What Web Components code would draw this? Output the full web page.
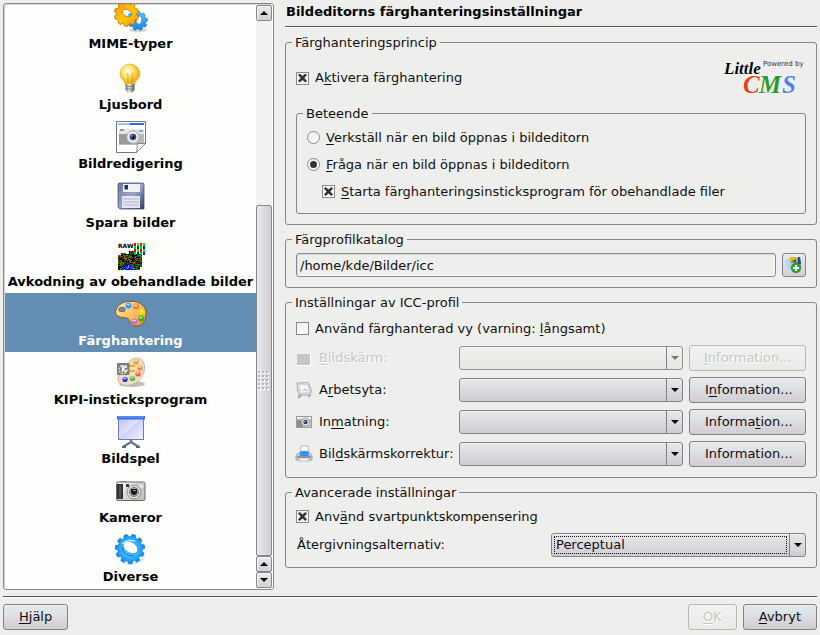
<!DOCTYPE html>
<html lang="sv">
<head>
<meta charset="utf-8">
<title>Bildeditorns färghanteringsinställningar</title>
<style>
html, body { margin: 0; }
body { background: #eeefec; color: #101010; font: 13px/16px "DejaVu Sans", sans-serif; }
</style>
</head>
<body>
<settings-dialog></settings-dialog>

<template id="t-dialog">
  <style>
    :host { display: flex; flex-direction: column; height: 100vh; box-sizing: border-box; padding: 3px 3px 5px; }
    .main { flex: 1; min-height: 0; display: grid; grid-template-columns: 271px 1fr; gap: 11px; }
    .page { display: flex; flex-direction: column; gap: 6px; min-width: 0; }
    h1 { margin: 0; padding: 1px 1px 6px; font-size: 13px; line-height: 16px; font-weight: bold; color: #000; }
    .head { border-bottom: 1px solid #555753; box-shadow: 0 1px #fff; margin-bottom: 1px; }
    hr { margin: 6px 0; border: 0; height: 1px; width: 100%; background: #555753; border-bottom: 1px solid #fff; }
    footer { display: flex; gap: 6px; }
    .grow { flex: 1; }
    .row { display: flex; align-items: center; justify-content: space-between; height: 54px; }
    .radios { display: flex; flex-direction: column; gap: 6px; padding-bottom: 1px; }
    .sub { margin-left: 15px; }
    .path { display: flex; gap: 6px; }
    path-input { flex: 1; }
    .stack { display: flex; flex-direction: column; gap: 6px; }
    .profiles { padding-top: 2px; }
  </style>
  <div class="main">
    <page-list>
      <page-item icon="mime">MIME-typer</page-item>
      <page-item icon="bulb" tall>Ljusbord</page-item>
      <page-item icon="edit">Bildredigering</page-item>
      <page-item icon="floppy">Spara bilder</page-item>
      <page-item icon="raw">Avkodning av obehandlade bilder</page-item>
      <page-item icon="palette" selected>Färghantering</page-item>
      <page-item icon="kipi">KIPI-insticksprogram</page-item>
      <page-item icon="screen">Bildspel</page-item>
      <page-item icon="camera">Kameror</page-item>
      <page-item icon="gear">Diverse</page-item>
    </page-list>
    <div class="page">
      <div class="head"><h1>Bildeditorns färghanteringsinställningar</h1></div>
      <group-box label="Färghanteringsprincip" flush>
        <div class="row">
          <check-option checked>A<u>k</u>tivera färghantering</check-option>
          <cms-logo></cms-logo>
        </div>
        <group-box label="Beteende">
          <div class="radios">
            <check-option type="radio"><u>V</u>erkställ när en bild öppnas i bildeditorn</check-option>
            <check-option type="radio" checked><u>F</u>råga när en bild öppnas i bildeditorn</check-option>
            <check-option class="sub" checked><u>S</u>tarta färghanteringsinsticksprogram för obehandlade filer</check-option>
          </div>
        </group-box>
      </group-box>
      <group-box label="Färgprofilkatalog">
        <div class="path">
          <path-input value="/home/kde/Bilder/icc"></path-input>
          <push-button small label="Välj katalog"><ui-icon name="folder" size="18"></ui-icon></push-button>
        </div>
      </group-box>
      <group-box label="Inställningar av ICC-profil">
        <div class="stack profiles">
          <check-option>Använd färghanterad vy (varning: <u>l</u>ångsamt)</check-option>
          <field-row icon="blank" disabled><u>B</u>ildskärm:<push-button slot="end" disabled><u>I</u>nformation...</push-button></field-row>
          <field-row icon="monitor">A<u>r</u>betsyta:<push-button slot="end">I<u>n</u>formation...</push-button></field-row>
          <field-row icon="smallcam">In<u>m</u>atning:<push-button slot="end">Informa<u>t</u>ion...</push-button></field-row>
          <field-row icon="printer">Bil<u>d</u>skärmskorrektur:<push-button slot="end">Information...</push-button></field-row>
        </div>
      </group-box>
      <group-box label="Avancerade inställningar">
        <div class="stack">
          <check-option checked>Anv<u>ä</u>nd svartpunktskompensering</check-option>
          <field-row half value="Perceptual">Återgivningsalternativ:</field-row>
        </div>
      </group-box>
    </div>
  </div>
  <hr>
  <footer>
    <push-button><u>H</u>jälp</push-button>
    <span class="grow"></span>
    <push-button disabled><u>O</u>K</push-button>
    <push-button><u>A</u>vbryt</push-button>
  </footer>
</template>

<template id="t-list">
  <style>
    :host { display: grid; grid-template-columns: 1fr 17px; border: 1px solid #888a85; border-radius: 3px; background: #fefefd; box-sizing: border-box; min-height: 0; padding: 0 0 1px; box-shadow: inset 1px 1px #d4d5d2; }
    nav { display: flex; flex-direction: column; justify-content: flex-end; overflow: hidden; min-height: 0; padding-left: 1px; }
    .bar { display: flex; flex-direction: column; min-height: 0; padding: 1px 1px 0 0; }
    button { flex: none; width: 16px; height: 16px; padding: 0; display: grid; place-items: center; border: 1px solid #85888b; border-radius: 2px; background: linear-gradient(#eceaef, #d3d0d6); box-shadow: inset 1px 1px #f6f5f8; }
    .track { flex: 185; background: #fbfbfa repeating-conic-gradient(#e9ebe8 0 25%, #fbfbfa 0 50%) 0 0 / 2px 2px; }
    .thumb { flex: 350; width: 16px; box-sizing: border-box; border: 1px solid #85888b; border-radius: 2px; background: linear-gradient(90deg, #eceaef, #cfccd2); display: grid; place-items: center; }
    .grip { width: 12px; height: 20px; background: radial-gradient(circle at 1px 1px, #b4b2b8 1px, transparent 1px) 0 0 / 4px 4px, radial-gradient(circle at 1px 1px, #fff 1px, transparent 1px) 1px 1px / 4px 4px; }
  </style>
  <nav aria-label="Inställningssidor"><slot></slot></nav>
  <div class="bar">
    <button aria-label="Rulla upp"><svg width="8" height="4"><path d="M0 4L4 0L8 4Z"/></svg></button>
    <div class="track"></div>
    <div class="thumb"><span class="grip"></span></div>
    <button aria-label="Rulla upp"><svg width="8" height="4"><path d="M0 4L4 0L8 4Z"/></svg></button>
    <button aria-label="Rulla ned"><svg width="8" height="4"><path d="M0 0H8L4 4Z"/></svg></button>
  </div>
</template>

<script>
const gear = (cx, cy, ro, ri, n, rot = 0) => {
  let d = '';
  const step = Math.PI * 2 / n;
  for (let i = 0; i < n; i++) {
    [[0, ri], [.16, ro], [.56, ro], [.74, ri]].forEach(([f, r]) => {
      const a = rot + (i + f) * step;
      d += (d ? 'L' : 'M') + (cx + r * Math.cos(a)).toFixed(2) + ' ' + (cy + r * Math.sin(a)).toFixed(2);
    });
  }
  return d + 'Z';
};
const hole = (cx, cy, rx, ry, tilt = 0) => {
  const a = tilt * Math.PI / 180, dx = rx * Math.cos(a), dy = rx * Math.sin(a);
  return `M${cx - dx} ${cy - dy}a${rx} ${ry} ${tilt} 1 0 ${2 * dx} ${2 * dy}a${rx} ${ry} ${tilt} 1 0 ${-2 * dx} ${-2 * dy}Z`;
};

const rawPixels = () => {
  const colours = ['#060', '#111', '#000', '#900', '#181', '#550', '#000', '#0a0', '#003', '#a50'];
  let out = '', seed = 7;
  for (let y = 11; y < 30; y++) for (let x = 3; x < 27; x++) {
    seed = (seed * 1103515245 + 12345) % 2147483648;
    const top = x < 6 ? 15 : x < 11 ? 13 : x < 14 ? 14 : x < 20 ? 11 : 14;
    if (y < top || (x > 24 && y > 26)) continue;
    const blue = y > 23 && Math.abs(x - 13) < y - 22;
    const c = blue ? ['#11f', '#20c', '#0bf'][(seed >> 8) % 3] : colours[(seed >> 8) % 10];
    out += `<rect x="${x}" y="${y}" width="1" height="1" fill="${c}"/>`;
  }
  for (let i = 0; i < 4; i++) for (let j = 0; j < 4; j++) {
    const odd = j % 2;
    const c = i % 2 ? (odd ? '#1a1aff' : '#0e0') : (odd ? '#0d0' : '#f00');
    out += `<rect x="${19 + i * 3}" y="${3 + j * 3}" width="2" height="3" fill="${c}"/>`;
  }
  return out;
};
const dot = (x, y, c, r = 2.6) => `<circle cx="${x}" cy="${y}" r="${r}" fill="${c}"/><ellipse cx="${x - .3}" cy="${y - 1}" rx="${r * .6}" ry="${r * .35}" fill="#fff" opacity=".65"/>`;

const ICONS = {
  mime: `<defs><linearGradient id="y" x2="1" y2="1"><stop stop-color="#ff8a10"/><stop offset=".5" stop-color="#ffc80a"/><stop offset="1" stop-color="#f69a00"/></linearGradient><linearGradient id="b" x2="0" y2="1"><stop stop-color="#58c4ff"/><stop offset="1" stop-color="#1c7fe6"/></linearGradient></defs>
    <ellipse cx="23" cy="28" rx="9" ry="2.500" fill="#000" opacity=".15"/>
    <path fill-rule="evenodd" fill="url(#b)" stroke="#2674bb" stroke-width=".7" d="${gear(23, 19, 9.5, 7.8, 9, .3)}${hole(24, 18, 2.8, 4, 10)}"/>
    <path fill-rule="evenodd" fill="url(#y)" stroke="#bd6c00" stroke-width=".8" d="${gear(11.5, 12, 12.3, 10.3, 10, .1)}${hole(12, 11, 5, 3.3, 30)}"/><path d="M13 12l3-1 0 3-2 1z" fill="#2ba9e8"/>`,
  gear: `<defs><radialGradient id="g"><stop stop-color="#7de0ff"/><stop offset=".75" stop-color="#22a5ff"/><stop offset="1" stop-color="#1b84e4"/></radialGradient></defs>
    <path d="M6 25Q18 33 29 23" fill="none" stroke="#cfd6dc" stroke-width="3" opacity=".6"/>
    <path fill-rule="evenodd" fill="url(#g)" stroke="#1c80d2" stroke-width=".8" d="${gear(15, 14, 14.8, 12.2, 11, .2)}${hole(15.5, 12.5, 8, 5.5, 30)}"/><path d="M7 9Q12 4 20 6" stroke="#b9efff" fill="none" stroke-width="1.400"/><path d="M7 12q1 9 12 9" stroke="#1571cc" fill="none"/>`,
  bulb: `<defs><radialGradient id="l" cx=".4" cy=".35"><stop stop-color="#fffef0"/><stop offset=".5" stop-color="#ffe97a"/><stop offset="1" stop-color="#f3b61c"/></radialGradient><linearGradient id="s"><stop stop-color="#777"/><stop offset=".4" stop-color="#eee"/><stop offset="1" stop-color="#555"/></linearGradient></defs>
    <path d="M15 1a10 10 0 0 1 10 10c0 5-5 6-5.500 11h-9C10 17 5 16 5 11A10 10 0 0 1 15 1Z" fill="url(#l)" stroke="#d9a52a" stroke-width=".6"/><path d="M13 20V12l-1-2M17 20V12l1-2" stroke="#c98e10" stroke-width=".8" fill="none"/><path d="M10.500 21h9v6l-2 2.500h-5l-2-2.500z" fill="url(#s)"/><path d="M11 23.500h8M11 26h8" stroke="#666" stroke-width=".7"/>`,
  edit: `<path d="M1.500-.5h29v22l-9 9h-20z" fill="#fff" stroke="#777976"/><path d="M3 1h26v2H3z" fill="#2f6fd0"/><path d="M3 1h12v2H3z" fill="#9cc2ee"/><path d="M4 7h25v14l-2 2H4z" fill="#b9bbba"/><path d="M4 7h25v5H4z" fill="#e6e7e6"/><path d="M4 12h12v10H4z" fill="#999b9a"/><path d="M5 8h4" stroke="#444"/><path d="M24 9h4" stroke="#69c" stroke-width="1.500"/><circle cx="18" cy="15" r="6.300" fill="#ececec" stroke="#a0a2a1"/><circle cx="18" cy="15" r="3.300" fill="#334a86"/><circle cx="18" cy="15" r="1.500" fill="#050a20"/><circle cx="17" cy="14" r=".8" fill="#cfe0ff"/><path d="M30.500 21.500h-8l-1 9z" fill="#f4f4f3" stroke="#777976" stroke-width=".8"/>`,
  floppy: `<defs><linearGradient id="f" x2="1" y2="1"><stop stop-color="#6d7698"/><stop offset=".5" stop-color="#9aa5c8"/><stop offset="1" stop-color="#303a68"/></linearGradient></defs><path d="M3 3l1-1h24l1 1v25H5l-2-2z" fill="url(#f)" stroke="#3d4670" stroke-width=".7"/><path d="M8 3h17v8H8z" fill="#f0f2f7"/><path d="M9.500 4h3.500v4.500H9.500z" fill="#273056"/><path d="M7 15h18v12H7z" fill="#e3e6ef"/><path d="M8 18h16M8 21h16M8 24h16" stroke="#b0b7cd"/>`,
  raw: `<text x="3" y="8" font-family="DejaVu Sans" font-size="6" font-weight="bold" fill="#000">RAW</text>${rawPixels()}`,
  palette: `<defs><linearGradient id="p" x2="1" y2="1"><stop stop-color="#fff0c8"/><stop offset=".5" stop-color="#ffc164"/><stop offset="1" stop-color="#f49516"/></linearGradient></defs><path d="M.8 12C2 5 10 2 16 2.300 26 2.500 32 8 31 16c-.5 8-6 11.500-11 11-5-.5-4-4-6-6.500S8 19 5 18 0 15 .8 12Z" fill="url(#p)" stroke="#8c551b"/><ellipse cx="7" cy="10.500" rx="3.300" ry="2.200" fill="#628eb4" stroke="#8c551b" stroke-width=".8"/>${dot(13.500, 6.500, '#2a9af0', 3)}${dot(21, 7.500, '#f48030', 3)}${dot(27, 13, '#f8d800', 3)}${dot(26, 19.500, '#34b020', 3)}${dot(19.500, 22.500, '#b370d8', 3)}`,
  kipi: `<ellipse cx="17" cy="26" rx="13" ry="3" fill="#000" opacity=".25"/><path d="M15 3C19-2 29-1 29.500 8c.5 8-4 16-12 18.500C9 29 3 26 3 21c0-6 4-4 8-8 2-3 1-6 4-10Z" fill="#f1dcc2" stroke="#c9a684" stroke-width=".8"/>${dot(21, 4, '#f0a030')}${dot(25, 10, '#ef8a35')}${dot(23, 16, '#ec6030')}${dot(17.500, 20.500, '#4ebc42')}${dot(10, 21.500, '#2633d0')}<path d="M14 7h6v2h-6zM14 12h6v2h-6z" fill="#f0ac18"/><rect x="2" y="5" width="12.500" height="12" rx="1" fill="#7a7d7c"/><circle cx="8" cy="11.500" r="4" fill="none" stroke="#ddd" stroke-width="1.400" stroke-dasharray="2 1"/><path d="M7.500 7.500v6.500M11.500 7.500l-3.500 3.500 3.500 3" stroke="#fff" stroke-width="1.500" fill="none"/>`,
  screen: `<defs><linearGradient id="sc" x2="1" y2="1"><stop stop-color="#b9bdf8"/><stop offset=".45" stop-color="#dfe0fc"/><stop offset=".5" stop-color="#cdd0fa"/><stop offset="1" stop-color="#f6f6ff"/></linearGradient></defs><path d="M16 22v4M16 25l-8 5M16 25l8 5" stroke="#70748a" stroke-width="2.400" fill="none"/><path d="M7 30h4M21 30h4" stroke="#5c6080" stroke-width="2"/><rect x="3.500" y="1" width="25" height="21.500" fill="url(#sc)" stroke="#747a9a"/><rect x="2" y="-1" width="28" height="3.500" fill="#3170e2"/><path d="M3 0h26" stroke="#73a6ff"/>`,
  camera: `<defs><linearGradient id="c" x2="1" y2="1"><stop stop-color="#fafafa"/><stop offset="1" stop-color="#b9b9b6"/></linearGradient></defs><path d="M5 5h7v2H5z" fill="#aaa"/><rect x="1.500" y="6" width="28.500" height="18.500" rx="1.500" fill="url(#c)" stroke="#696966"/><path d="M2 8h6v15H2z" fill="#303030"/><path d="M5 9v13" stroke="#777"/><rect x="11" y="8" width="3" height="3" fill="#333"/><rect x="22" y="8" width="7" height="5" fill="#dce2ee" stroke="#999" stroke-width=".5"/><circle cx="19" cy="16" r="7" fill="#deded9" stroke="#8e8e88"/><circle cx="19" cy="16" r="4.500" fill="#aaa" stroke="#777"/><path d="M16 13h6v4l-2 2h-2l-2-2z" fill="#181b1c"/><path d="M18 14.500h3" stroke="#7aa"/>`,
  blank: `<path d="M1 4h13v11H1z" fill="#c5c7c4"/><path d="M1 15.500h13.500V4" fill="none" stroke="#fff"/>`,
  monitor: `<path d="M3 12l-1 4 4-2M13 12l2 2-3 1" fill="#aaa" stroke="#999" stroke-width=".6"/><path d="M1 1l11-.5Q14.500 5 15.500 9L14 13H4L1.500 9Z" fill="#d9dadb" stroke="#aaacad"/><path d="M3 3l9-.5 1 8-8 .5Z" fill="#f3f5ff" stroke="#c7c9cc" stroke-width=".5"/><path d="M7 9l2-2 2 2" stroke="#8ab4ee" fill="none"/>`,
  smallcam: `<rect x=".5" y="2.500" width="15" height="11" fill="#c4c5c4" stroke="#999b99"/><path d="M1 6h6v7H1z" fill="#8d8f8d"/><path d="M1 3h14v2H1z" fill="#eee"/><circle cx="9.500" cy="8" r="4" fill="#eee" stroke="#999"/><circle cx="9.500" cy="8" r="2.200" fill="#25386c"/><circle cx="9" cy="7.500" r=".7" fill="#bdf"/>`,
  printer: `<path d="M5 0h7l1 8H4z" fill="#fff" stroke="#999da8" stroke-width=".7"/><path d="M2 7h12l2 3v4H0v-4z" fill="#cfd0dc" stroke="#8f91a3" stroke-width=".8"/><path d="M4.500 5h7.500l1 5H3.500z" fill="#2d97f0"/><path d="M3 12h10v3H3z" fill="#fff" stroke="#8f91a3" stroke-width=".6"/><path d="M1 11h14" stroke="#5a5d74"/>`,
  folder: `<path d="M1 4q3-3 6-1v11l-3 1Q-1 10 1 4Z" fill="#b4d6f2"/><path d="M5 2h10l1 8H6z" fill="#5d8fc8"/><path d="M5 1h7v5H5z" fill="#d7bb20"/><path d="M7 5l4-2v4z" fill="#456022"/><path d="M5 7h5v5H5z" fill="#a8cbee"/><path d="M13 1h2l1 7h-3z" fill="#1847b0"/><circle cx="11" cy="12" r="4.800" fill="#2ca82a" stroke="#168016" stroke-width=".6"/><path d="M11 9v6M8 12h6" stroke="#fff" stroke-width="2"/>`
};

class Base extends HTMLElement {
  connectedCallback() {
    if (this.shadowRoot) return;
    this.attachShadow({ mode: 'open' }).innerHTML = this.render();
  }
}
const fromTemplate = id => class extends HTMLElement {
  connectedCallback() {
    if (!this.shadowRoot) this.attachShadow({ mode: 'open' }).append(document.getElementById(id).content.cloneNode(true));
  }
};
const underline = '::slotted(u) { text-decoration-thickness: 1px; text-underline-offset: 2px; text-decoration-skip-ink: none; }';

customElements.define('ui-icon', class extends Base {
  render() {
    const size = this.getAttribute('size') || 32;
    return `<style>:host { display: block; flex: none; } svg { display: block; overflow: visible; }</style>
      <svg width="${size}" height="${size}" viewBox="0 0 ${size} ${size}" aria-hidden="true">${ICONS[this.getAttribute('name')]}</svg>`;
  }
});

customElements.define('page-item', class extends Base {
  render() {
    return `<style>
      :host { display: block; flex: none; }
      a { display: flex; flex-direction: column; align-items: center; gap: 2px; padding: 6px 0 3px; color: #000; font-weight: bold; text-decoration: none; white-space: nowrap; }
      :host([tall]) a { padding-top: 8px; }
      :host([selected]) a { background: #628eb4; color: #fff; }
    </style><a href="#"><ui-icon name="${this.getAttribute('icon')}"></ui-icon><span><slot></slot></span></a>`;
  }
});

customElements.define('group-box', class extends Base {
  render() {
    return `<style>
      :host { display: block; }
      fieldset { margin: 0; min-width: 0; padding: 5px 10px 10px; border: 1px solid #858783; border-radius: 3px; }
      :host([flush]) fieldset { padding-top: 0; }
      legend { margin-left: -4px; padding: 0 3px; line-height: 17px; }
    </style><fieldset><legend>${this.getAttribute('label')}</legend><slot></slot></fieldset>`;
  }
});

customElements.define('check-option', class extends Base {
  render() {
    const type = this.getAttribute('type') || 'checkbox';
    return `<style>
      :host { display: block; }
      label { display: flex; align-items: center; gap: 6px; height: 21px; white-space: nowrap; }
      input { appearance: none; flex: none; margin: 0; width: 13px; height: 13px; border: 1px solid #858a8c; background: linear-gradient(#f1f2f0, #fdfdfc); display: grid; place-items: center; }
      input[type=radio] { border-radius: 50%; }
      input[type=checkbox]:checked::before { content: ""; width: 9px; height: 9px; background: #333; clip-path: polygon(0 18%, 18% 0, 50% 28%, 82% 0, 100% 18%, 70% 50%, 100% 82%, 82% 100%, 50% 72%, 18% 100%, 0 82%, 30% 50%); }
      input[type=radio]:checked::before { content: ""; width: 7px; height: 7px; border-radius: 50%; background: #333; }
      ${underline}
    </style><label><input type="${type}"${this.hasAttribute('checked') ? ' checked' : ''}><span><slot></slot></span></label>`;
  }
});

customElements.define('push-button', class extends Base {
  render() {
    const l = this.getAttribute('label');
    return `<style>
      :host { display: block; }
      button { width: 100%; height: 26px; padding: 0 14px; min-width: 49px; border: 1px solid #7f8487; border-radius: 3px; background: linear-gradient(#e4e8ea, #dce2e4 45%, #dddbe0 50%, #d0cdd3); box-shadow: inset 0 1px #eff1f2; color: inherit; font: inherit; white-space: nowrap; }
      button:not(:disabled) { padding: 0 15px; }
      :host([small]) button { width: 24px; min-width: 0; height: 24px; padding: 0; display: grid; place-items: center; background: linear-gradient(#eceaef, #d3d0d6); }
      button:disabled { color: #c5c7c4; text-shadow: 1px 1px #fff; border-color: #b7b9b5; background: linear-gradient(#f1f2f0, #e9ebe7); }
      ${underline}
    </style><button type="button"${l ? ` aria-label="${l}"` : ''}${this.hasAttribute('disabled') ? ' disabled' : ''}><slot></slot></button>`;
  }
});

customElements.define('path-input', class extends Base {
  render() {
    return `<style>
      :host { display: block; }
      input { display: block; width: 100%; height: 24px; box-sizing: border-box; padding: 0 3px; border: 1px solid #858a8c; border-radius: 3px; background: #eeefec; box-shadow: inset 1px 1px #d8dad7, inset -1px -1px #fff; font: inherit; color: inherit; }
    </style><input type="text" aria-label="Färgprofilkatalog" value="${this.getAttribute('value')}">`;
  }
});

customElements.define('field-row', class extends Base {
  render() {
    const icon = this.getAttribute('icon'), value = this.getAttribute('value') || '';
    return `<style>
      :host { display: grid; grid-template-columns: 157px 1fr 117px; gap: 6px; align-items: center; }
      :host([half]) { grid-template-columns: 1fr 1fr; gap: 0; }
      label { display: flex; align-items: center; gap: 7px; white-space: nowrap; }
      :host([half]) label { padding-left: 1px; }
      :host([disabled]) label { color: #c5c7c4; text-shadow: 1px 1px #fff; }
      .combo { display: grid; min-width: 0; }
      select, .over { grid-area: 1 / 1; }
      select { appearance: none; width: 100%; height: 24px; padding: 0 20px 0 4px; margin: 0; border: 1px solid #7f8487; border-radius: 3px; background: linear-gradient(#eae8ed, #cfccd2); box-shadow: inset 0 1px #f3f2f5; font: inherit; color: inherit; }
      select:disabled { opacity: 1; border-color: #8e918e; background: linear-gradient(#f0f1ee, #e5e7e3); }
      .over { pointer-events: none; display: grid; grid-template-columns: 1fr 17px; }
      .arrow { display: grid; place-items: center; border-left: 1px solid #7f8487; margin: 1px 0; }
      .focus { margin: 3px 2px 3px 3px; }
      :host([half]) .focus { border: 1px dotted #111; }
      svg { fill: #000; } :host([disabled]) svg { fill: #777a76; }
      ${underline}
    </style>
    <label for="s">${icon ? `<ui-icon name="${icon}" size="16"></ui-icon>` : ''}<span><slot></slot></span></label>
    <div class="combo"><select id="s"${this.hasAttribute('disabled') ? ' disabled' : ''}><option>${value}</option></select>
      <div class="over"><span class="focus"></span><span class="arrow"><svg width="8" height="4"><path d="M0 0H8L4 4Z"/></svg></span></div></div>
    <slot name="end"></slot>`;
  }
});

customElements.define('cms-logo', class extends Base {
  render() {
    return `<style>:host { display: block; } svg { display: block; }
      text { font-family: "Liberation Serif", serif; font-weight: bold; font-style: italic; paint-order: stroke; stroke: #fff; stroke-width: 1px; }
      .s { font: 7px "DejaVu Sans", sans-serif; stroke: none; fill: #333; }</style>
    <svg width="83" height="38" viewBox="0 0 83 38" role="img" aria-label="Powered by Little CMS">
      <text class="s" x="40" y="7">Powered by</text>
      <text x="1" y="15" font-size="17">Little</text>
      <text y="34" font-size="25"><tspan x="20" fill="#e8410f">C</tspan><tspan x="36" fill="#2a9a30">M</tspan><tspan x="59" fill="#4f7dfb">S</tspan></text>
    </svg>`;
  }
});

customElements.define('page-list', fromTemplate('t-list'));
customElements.define('settings-dialog', fromTemplate('t-dialog'));
</script>
</body>
</html>
